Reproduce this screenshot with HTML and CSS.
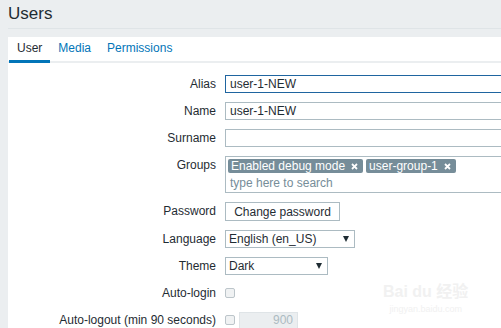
FILE: index.html
```html
<!DOCTYPE html>
<html lang="en">
<head>
  <meta charset="UTF-8" />
  <title>Users</title>
  <link rel="stylesheet" href="styles.css">
</head>
<body>

  <div class="header">
    <h1>Users</h1>
  </div>

  <div class="panel">
    <ul class="tabs">
      <li class="tab active">User</li>
      <li class="tab">Media</li>
      <li class="tab">Permissions</li>
    </ul>

    <div class="form">
      <label class="label">Alias</label>
      <div class="field"><input type="text" class="input focus" value="user-1-NEW"></div>

      <label class="label">Name</label>
      <div class="field"><input type="text" class="input" value="user-1-NEW"></div>

      <label class="label">Surname</label>
      <div class="field"><input type="text" class="input" value=""></div>

      <label class="label">Groups</label>
      <div class="field">
        <div class="multiselect">
          <div class="tags">
            <span class="tag">Enabled debug mode
              <svg class="tag-x" width="7" height="7" viewBox="0 0 7 7"><path d="M1 1L6 6M6 1L1 6" stroke="#fff" stroke-width="1.8"/></svg>
            </span>
            <span class="tag">user-group-1
              <svg class="tag-x" width="7" height="7" viewBox="0 0 7 7"><path d="M1 1L6 6M6 1L1 6" stroke="#fff" stroke-width="1.8"/></svg>
            </span>
          </div>
          <div class="search">type here to search</div>
        </div>
      </div>

      <label class="label">Password</label>
      <div class="field"><button class="btn">Change password</button></div>

      <label class="label">Language</label>
      <div class="field">
        <div class="select select-lang"><span>English (en_US)</span><span class="caret"></span></div>
      </div>

      <label class="label">Theme</label>
      <div class="field">
        <div class="select select-theme"><span>Dark</span><span class="caret"></span></div>
      </div>

      <label class="label">Auto-login</label>
      <div class="field"><span class="checkbox"></span></div>

      <label class="label">Auto-logout (min 90 seconds)</label>
      <div class="field">
        <span class="checkbox"></span>
        <input type="text" class="input short" value="900" readonly>
      </div>
    </div>

    <div class="watermark">
      <div class="wm-logo">Bai du 经验</div>
      <div class="wm-url">jingyan.baidu.com</div>
    </div>
  </div>

</body>
</html>
```

FILE: styles.css
```css
* {
  box-sizing: border-box;
  margin: 0;
  padding: 0;
}

html, body {
  width: 501px;
  height: 328px;
  overflow: hidden;
}

body {
  font-family: 'Liberation Sans', Arial, sans-serif;
  font-size: 12px;
  color: #1f2c33;
  background-color: #ebeef0;
}

.header {
  margin-left: 8px;
  height: 29px;
  border-bottom: 1px solid #dfe4e7;
}

h1 {
  font-size: 17px;
  font-weight: normal;
  line-height: 28px;
}

.panel {
  position: relative;
  margin: 8px 0 0 8px;
  height: 291px;
  background: #fff;
  overflow: hidden;
}

.tabs {
  list-style: none;
  display: flex;
  padding-left: 1px;
  border-bottom: 2px solid #ebeef0;
}

.tab {
  line-height: 23px;
  padding: 0 8px;
  color: #0275b8;
  border-bottom: 3px solid transparent;
  margin-bottom: -2px;
}

.tab.active {
  color: #1f2c33;
  border-bottom-color: #0275b8;
}

.form {
  display: grid;
  grid-template-columns: 208px 1fr;
  column-gap: 9px;
  row-gap: 9px;
  padding-top: 12px;
}

.label {
  text-align: right;
  line-height: 18px;
  white-space: nowrap;
}

.field {
  display: flex;
  align-items: center;
  gap: 4px;
  min-height: 18px;
  min-width: 0;
}

.input {
  font-family: inherit;
  font-size: 12px;
  color: #1f2c33;
  width: 453px;
  flex-shrink: 0;
  height: 18px;
  border: 1px solid #acbbc2;
  padding: 0 4px;
  background: #fff;
  outline: none;
}

.input.focus {
  border-color: #1f65a0;
}

.input.short {
  width: 59px;
  height: 17px;
  text-align: right;
  background: #ebeef0;
  border-color: #dfe4e7;
  color: #acbbc2;
}

.multiselect {
  width: 453px;
  flex-shrink: 0;
  height: 37px;
  border: 1px solid #acbbc2;
  padding: 2px 2px 0;
}

.tags {
  display: flex;
  gap: 3px;
}

.tag {
  display: inline-flex;
  align-items: center;
  gap: 6px;
  height: 14px;
  padding: 0 5px 0 3px;
  background: #768d99;
  color: #fff;
  border-radius: 2px;
  line-height: 14px;
}

.search {
  color: #768d99;
  line-height: 16px;
  padding: 2px 0 0 2px;
}

.btn {
  font-family: inherit;
  font-size: 12px;
  color: #1f2c33;
  background: #fff;
  border: 1px solid #acbbc2;
  height: 19px;
  width: 115px;
  padding: 0 8px;
}

.select {
  display: flex;
  align-items: center;
  justify-content: space-between;
  height: 18px;
  border: 1px solid #acbbc2;
  padding: 0 5px 0 3px;
}

.select-lang {
  width: 130px;
}

.select-theme {
  width: 103px;
}

.caret {
  width: 0;
  height: 0;
  border-left: 3.5px solid transparent;
  border-right: 3.5px solid transparent;
  border-top: 6px solid #1f2c33;
}

.checkbox {
  display: inline-block;
  width: 10px;
  height: 10px;
  flex-shrink: 0;
  border: 1px solid #bcc5ca;
  border-radius: 2px;
  background: #f0f2f3;
}

.watermark {
  position: absolute;
  left: 375px;
  top: 241px;
  color: #f1f1f1;
  text-align: center;
  font-family: 'Liberation Sans', 'Noto Sans CJK SC', sans-serif;
}

.wm-logo {
  font-size: 16px;
  font-weight: bold;
}

.wm-url {
  font-size: 9px;
  margin-top: 2px;
}
```
